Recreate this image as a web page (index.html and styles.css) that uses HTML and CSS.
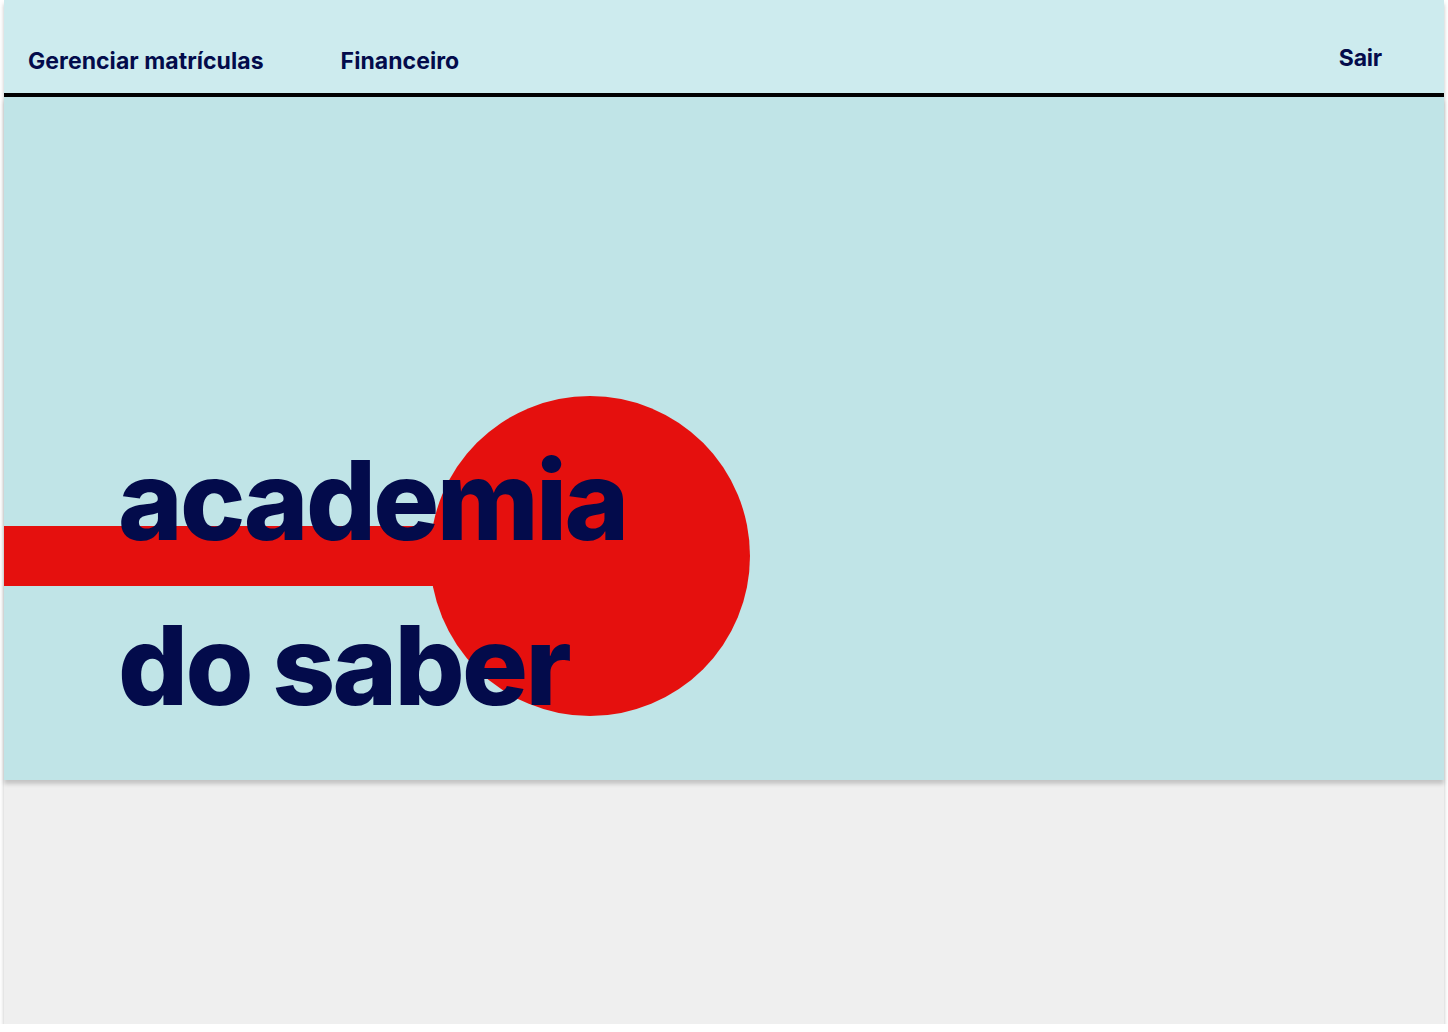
FILE: index.html
```html
<!DOCTYPE html>
<html lang="pt-BR">
<head>
<meta charset="utf-8">
<title>Academia do Saber</title>
<link rel="stylesheet" href="styles.css">
</head>
<body>
<div class="frame">
  <header class="topbar">
    <nav class="nav-left">
      <a class="nav-link" href="#">Gerenciar matrículas</a>
      <a class="nav-link" href="#">Financeiro</a>
    </nav>
    <a class="nav-link nav-exit" href="#">Sair</a>
  </header>
  <section class="hero">
    <div class="hero-circle"></div>
    <div class="hero-bar"></div>
    <h1 class="hero-title">academia<br>do saber</h1>
  </section>
  <section class="content"></section>
</div>
</body>
</html>
```

FILE: styles.css
```css
* { box-sizing: border-box; }
html, body { margin: 0; padding: 0; background: #ffffff; }
body { font-family: Inter, "Noto Sans", sans-serif; }

.frame {
  width: 1440px;
  margin: 0 auto;
  height: 1024px;
  display: flex;
  flex-direction: column;
  box-shadow: 0 4px 4px rgba(0,0,0,0.25);
  background: #efefef;
}

.topbar {
  height: 97px;
  background: #cdebee;
  border-bottom: 4px solid #000;
  display: flex;
  align-items: flex-start;
  justify-content: space-between;
  padding: 0 62px 0 24px;
}
.nav-left { display: flex; gap: 77px; padding-top: 45px; }
.nav-link {
  color: #030b4b;
  text-decoration: none;
  font-weight: 700;
  font-size: 23px;
  line-height: 32px;
  letter-spacing: 0.05px;
}
.nav-exit { padding-top: 42px; letter-spacing: -0.2px; }

.hero {
  position: relative;
  height: 683px;
  background: #c0e4e7;
  box-shadow: 0 4px 4px rgba(0,0,0,0.18);
  z-index: 1;
  padding: 321px 0 0 114px;
  overflow: hidden;
}
.hero-circle {
  position: absolute;
  left: 426px;
  top: 299px;
  width: 320px;
  height: 320px;
  border-radius: 50%;
  background: #e5100e;
}
.hero-bar {
  position: absolute;
  left: 0;
  top: 429px;
  width: 430px;
  height: 60px;
  background: #e5100e;
}
.hero-title {
  position: relative;
  margin: 0;
  color: #030b4b;
  font-weight: 800;
  font-size: 110px;
  line-height: 165px;
  letter-spacing: -2.7px;
}

.content {
  flex: 1;
  background: #efefef;
}
```
